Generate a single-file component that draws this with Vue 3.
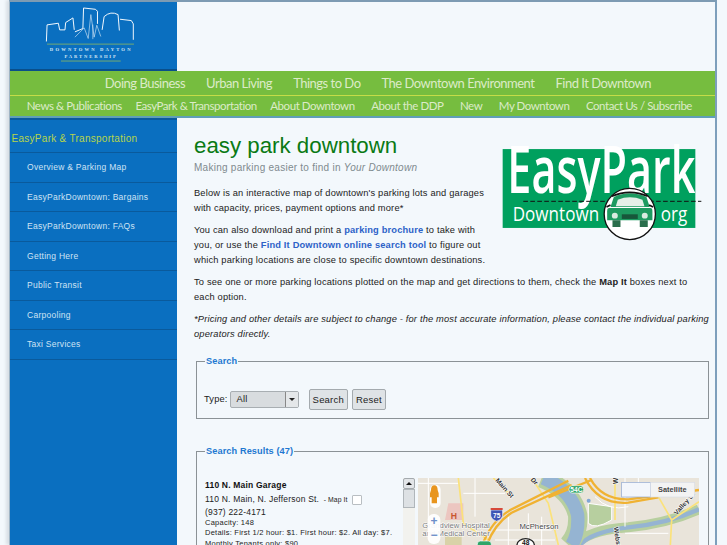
<template>
  <div class="page">
    <div class="wrap">
      <header class="top">
        <div class="brand">
          <svg class="skyline" viewBox="28 6 503 202" width="168" height="67">
            <path d="M136 125 L138 75 L172 70 L176 90 L192 90 L194 68 L216 54 L220 90 M222 96 L246 86 L248 24 L284 28 L290 34 L290 72 M304 90 L310 50 Q330 32 352 44 L356 92 M358 58 L392 62 L398 72 L398 120" fill="none" stroke="#f2f8fd" stroke-width="3"/>
            <path d="M222 112 L250 84 L262 116 L270 44 L280 112 L288 76 L300 110 M276 74 L276 118" fill="none" stroke="#cfe3f5" stroke-width="2"/>
            <path d="M138 133 H400 M180 184 H360" stroke="#a9c84a" stroke-width="2"/>
            <text class="brand-text" x="268" y="154" text-anchor="middle" textLength="243">DOWNTOWN DAYTON</text>
            <text class="brand-text" x="268" y="176" text-anchor="middle" textLength="155">PARTNERSHIP</text>
          </svg>
        </div>
        <div class="banner"></div>
      </header>

      <nav class="nav">
        <div class="nav-main">
          <a v-for="item in mainNav" :key="item">{{ item }}</a>
        </div>
        <div class="nav-sub">
          <a v-for="item in subNav" :key="item">{{ item }}</a>
        </div>
      </nav>

      <div class="body">
        <aside class="side">
          <div class="side-title">EasyPark &amp; Transportation</div>
          <a v-for="item in sideNav" :key="item" class="side-link">{{ item }}</a>
        </aside>

        <main class="content">
          <svg class="park-logo" viewBox="30 10 610 300" width="203" height="100">
            <rect x="38" y="28" width="579" height="237" fill="#00a05e"/>
            <text class="logo-big" x="52" y="160" textLength="565" lengthAdjust="spacingAndGlyphs">EasyPark</text>
            <path d="M100 185 H635" stroke="#111" stroke-width="3" stroke-dasharray="14 7"/>
            <text class="logo-small" x="68" y="245" textLength="260" lengthAdjust="spacingAndGlyphs">Downtown</text>
            <text class="logo-small" x="513" y="245" textLength="80" lengthAdjust="spacingAndGlyphs">org</text>
            <circle cx="420" cy="223" r="77" fill="#fff" stroke="#111" stroke-width="4"/>
            <path d="M372 172 Q420 150 470 172 L480 202 L362 202 Z" fill="#1d9a60"/>
            <path d="M384 180 Q420 166 458 180 L464 200 L378 200 Z" fill="#e6efe8"/>
            <path d="M358 205 H482 Q488 205 488 215 V242 H352 V215 Q352 205 358 205 Z" fill="#1d9a60"/>
            <path d="M368 242 H392 V262 H368 Z M450 242 H474 V262 H450 Z" fill="#2a6e4c"/>
            <circle cx="375" cy="228" r="9" fill="#d9ebe0"/>
            <circle cx="465" cy="228" r="9" fill="#d9ebe0"/>
            <path d="M396 224 H444 V238 H396 Z" fill="#17563a"/>
            <path d="M350 202 L362 196 M490 202 L478 196" stroke="#111" stroke-width="5"/>
            <path d="M366 170 Q420 146 474 170" fill="none" stroke="#111" stroke-width="5"/>
          </svg>

          <h1>easy park downtown</h1>
          <p class="tagline">Making parking easier to find in <em>Your Downtown</em></p>
          <p>Below is an interactive map of downtown's parking lots and garages with capacity, prices, payment options and more*</p>
          <p>You can also download and print a <a>parking brochure</a> to take with you, or use the <a>Find It Downtown online search tool</a> to figure out which parking locations are close to specific downtown destinations.</p>
          <p>To see one or more parking locations plotted on the map and get directions to them, check the <b>Map It</b> boxes next to each option.</p>
          <p><em>*Pricing and other details are subject to change - for the most accurate information, please contact the individual parking operators directly.</em></p>

          <fieldset class="box search">
            <legend>Search</legend>
            <div class="search-row">
              <label>Type:</label>
              <div class="select"><span>All</span><i class="select-btn"><i class="down"></i></i></div>
              <button>Search</button>
              <button>Reset</button>
            </div>
          </fieldset>

          <fieldset class="box results">
            <legend>Search Results (47)</legend>
            <div class="results-row">
              <div class="listing">
                <div class="garage">110 N. Main Garage</div>
                <div class="addr">110 N. Main, N. Jefferson St. <span class="mapit">- Map It</span><span class="check"></span></div>
                <div class="addr phone">(937) 222-4171</div>
                <div class="fine">Capacity: 148</div>
                <div class="fine">Details: First 1/2 hour: $1. First hour: $2. All day: $7.</div>
                <div class="fine">Monthly Tenants only: $90</div>
              </div>
              <div class="scroll">
                <span class="scroll-up"><i class="up"></i></span>
                <span class="scroll-thumb"></span>
              </div>
              <svg class="map" viewBox="69 114 843 201" width="281" height="67">
                <rect x="69" y="114" width="843" height="201" fill="#e9e4da"/>
                <path d="M540 315 Q580 270 700 262 Q820 250 912 208" fill="none" stroke="#b7cf9f" stroke-width="30"/>
                <path d="M555 315 Q590 275 700 262 Q820 250 912 208" fill="none" stroke="#95b4d2" stroke-width="13"/>
                <path d="M580 190 L650 200 L650 240 Q600 270 580 250 Z" fill="#b7cf9f" stroke="#fff" stroke-width="3"/>
                <path d="M440 114 Q530 150 548 225 Q552 280 520 315" fill="none" stroke="#b7cf9f" stroke-width="58"/>
                <path d="M445 114 Q530 150 548 225 Q552 280 530 315" fill="none" stroke="#95b4d2" stroke-width="40"/>
                <circle cx="581" cy="182" r="6" fill="#7fa6d6"/>
                <path d="M160 190 L205 190 L205 240 L150 240 Z" fill="#ecc6c0"/>
                <path d="M150 290 H200 V315 H150 Z" fill="#d9d2a8"/>
                <g fill="none" stroke="#fff" stroke-width="3">
                  <path d="M69 130 H190 M205 160 H330 M100 114 V240 M240 114 V230 M300 270 H470 M340 230 V315 M400 220 V315 M440 230 V315 M300 300 H480 M690 114 V260 M690 280 H820 M730 114 V170 M600 170 Q640 215 700 200"/>
                </g>
                <g fill="none" stroke="#fbe27a" stroke-width="5">
                  <path d="M190 114 L205 250 L280 300"/>
                  <path d="M410 114 L460 190 L490 315"/>
                  <path d="M660 114 V240"/>
                  <path d="M790 170 L830 240 L826 315 M830 240 L912 185"/>
                  <path d="M295 114 L350 170"/>
                </g>
                <g fill="none" stroke="#f0b232" stroke-width="7">
                  <path d="M262 315 Q290 240 350 208 L520 122"/>
                  <path d="M275 315 Q300 250 350 218 L530 135"/>
                  <path d="M460 172 L590 120"/>
                  <path d="M570 114 Q610 195 700 188 L790 172"/>
                  <path d="M585 114 Q620 180 700 178 L912 150"/>
                </g>
                <path d="M287 210 H323 V228 Q320 240 305 244 Q290 240 287 228 Z" fill="#3f55b5" stroke="#fff" stroke-width="2"/>
                <path d="M287 210 H323 V204 H287 Z" fill="#d6493a"/>
                <text class="m-shield" x="305" y="234" text-anchor="middle" fill="#fff">75</text>
                <rect x="522" y="137" width="44" height="22" rx="10" fill="#2fa568" stroke="#fff" stroke-width="2"/>
                <text class="m-shield" x="544" y="155" text-anchor="middle" fill="#fff">54C</text>
                <rect x="247" y="303" width="42" height="20" rx="9" fill="#2fa568" stroke="#fff" stroke-width="2"/>
                <ellipse cx="392" cy="314" rx="26" ry="18" fill="#fff" stroke="#222" stroke-width="4"/>
                <text class="m-shield" x="392" y="315" text-anchor="middle" fill="#111">48</text>
                <text class="m-h" x="177" y="238" text-anchor="middle">H</text>
                <text class="m-label" x="432" y="268" text-anchor="middle">McPherson</text>
                <text class="m-label gray" x="82" y="264">Grandview Hospital</text>
                <text class="m-label gray" x="82" y="288">and Medical Center</text>
                <text class="m-road" transform="translate(300 122) rotate(48)">Main St</text>
                <text class="m-road" transform="translate(406 120) rotate(48)">Dr</text>
                <text class="m-road" transform="translate(656 262) rotate(82)">Webster</text>
                <text class="m-road" transform="translate(845 226) rotate(-48)">Valley St</text>
                <text class="m-road" transform="translate(668 132) rotate(-90)">Web</text>
                <rect x="105" y="134" width="32" height="70" rx="15" fill="#fff" opacity=".9"/>
                <path d="M118 136 Q128 136 128 150 L131 160 V172 L126 172 V190 H110 V172 L105 172 V160 L108 150 Q108 136 118 136 Z" fill="#e8951e"/>
                <rect x="98" y="222" width="38" height="90" rx="17" fill="#fff" opacity=".92"/>
                <text class="m-zoom" x="117" y="254" text-anchor="middle">+</text>
                <text class="m-zoom" x="117" y="296" text-anchor="middle">−</text>
                <rect x="680" y="127" width="87" height="44" fill="#f3f6fb" stroke="#8ea6d0" stroke-width="2"/>
                <rect x="767" y="127" width="132" height="44" fill="#f3f3f3" stroke="#d8dde6" stroke-width="2"/>
                <text class="m-sat" x="832" y="156" text-anchor="middle">Satellite</text>
              </svg>
            </div>
          </fieldset>
        </main>
      </div>
    </div>
  </div>
</template>

<script setup>
const mainNav = ['Doing Business', 'Urban Living', 'Things to Do', 'The Downtown Environment', 'Find It Downtown']
const subNav = ['News & Publications', 'EasyPark & Transportation', 'About Downtown', 'About the DDP', 'New', 'My Downtown', 'Contact Us / Subscribe']
const sideNav = [
  'Overview & Parking Map',
  'EasyParkDowntown: Bargains',
  'EasyParkDowntown: FAQs',
  'Getting Here',
  'Public Transit',
  'Carpooling',
  'Taxi Services'
]
</script>

<style>
html, body {
  margin: 0;
  overflow: hidden;
  background: #f3f8fc;
}
</style>

<style scoped>
.page {
  height: 545px;
  width: 727px;
  overflow: hidden;
  padding-left: 9px;
  box-sizing: border-box;
  font-family: "Liberation Sans", Arial, sans-serif;
}

.wrap {
  width: 708px;
  height: 545px;
  box-sizing: border-box;
  border-top: 2px solid #7d9bb3;
  border-left: 1px solid #9fb4c4;
  border-right: 2px solid #7d9fbc;
  box-shadow: -3px 0 3px #d8dfe5;
  background: #f3f8fc;
  display: flex;
  flex-direction: column;
}

.top {
  display: flex;
  height: 67px;
  flex: none;
}

.brand {
  width: 167px;
  background: #0a6fc0;
  border-bottom: 2px solid #0a4f8a;
  margin-bottom: -2px;
}

.skyline {
  display: block;
}

.brand-text {
  font: bold 14px "Liberation Serif", serif;
  fill: #d6e8f6;
}

.banner {
  flex: 1;
}

.nav {
  flex: none;
  margin-top: 2px;
  background: #76bd3f;
  border-bottom: 2px solid #5f9fb8;
  color: #dcebc8;
  font-family: Lato, "Open Sans", sans-serif;
  white-space: nowrap;
}

.nav-main {
  display: flex;
  justify-content: flex-end;
  gap: 21px;
  height: 24px;
  line-height: 24px;
  padding-right: 64px;
  font-size: 13px;
  letter-spacing: -0.5px;
  border-bottom: 1px solid #c4dc48;
}

.nav-sub {
  display: flex;
  justify-content: flex-end;
  gap: 16.5px;
  height: 20px;
  line-height: 20px;
  padding-right: 23px;
  font-size: 11.5px;
  letter-spacing: -0.45px;
}

.nav-sub a:nth-child(2),
.nav-sub a:nth-child(3) {
  margin-left: -3px;
}

.body {
  flex: 1;
  display: flex;
  min-height: 0;
}

.side {
  width: 167px;
  flex: none;
  background: #0a6fc0;
  border-top: 2px solid #0a5a9c;
}

.side-title {
  height: 33px;
  line-height: 37px;
  padding-left: 1.5px;
  font-size: 10px;
  letter-spacing: 0.28px;
  color: #b7d54a;
  border-bottom: 1px solid #0a5a9c;
  box-sizing: border-box;
}

.side-link {
  display: block;
  height: 29.5px;
  line-height: 29px;
  padding-left: 17px;
  font-size: 8.5px;
  letter-spacing: 0.27px;
  color: #cfe3f4;
  border-bottom: 1px solid #0a5a9c;
  box-sizing: border-box;
}

.content {
  flex: 1;
  min-width: 0;
  padding: 13px 6px 0 17px;
  font-size: 9.3px;
  line-height: 14.8px;
  letter-spacing: 0.17px;
  color: #222;
}

.park-logo {
  float: right;
  margin: 12px 6px 0 10px;
}

.logo-big {
  font: 600 195px "Open Sans", sans-serif;
  fill: #fff;
}

.logo-small {
  font: 500 60px "Open Sans", sans-serif;
  fill: #fff;
}

h1 {
  margin: 0;
  font-size: 22.3px;
  line-height: 30px;
  font-weight: normal;
  letter-spacing: 0;
  color: #0a7a14;
}

p {
  margin: 0 0 7.7px;
}

.tagline {
  font-size: 10px;
  letter-spacing: 0.26px;
  color: #7f8a8f;
  margin: 0 0 10px;
}

.content p a {
  color: #2d62c8;
  font-weight: bold;
}

.box {
  margin: 13px 0 0 2px;
  padding: 0;
  border: 1.5px solid #8b9296;
  min-width: 0;
}

.box legend {
  margin-left: 8px;
  padding: 0 1px;
  font-size: 9.2px;
  line-height: 12px;
  letter-spacing: 0.1px;
  font-weight: bold;
  color: #1f78d1;
}

.search {
  height: 64px;
  box-sizing: border-box;
}

.search-row {
  display: flex;
  align-items: center;
  padding: 22px 0 0 7px;
}

.select {
  display: flex;
  justify-content: space-between;
  align-items: center;
  width: 69px;
  height: 17px;
  margin-left: 2px;
  padding-left: 6px;
  box-sizing: border-box;
  background: #d8dcdf;
  border: 1px solid #a8aeb2;
  border-radius: 2px;
}

.select-btn {
  display: flex;
  align-items: center;
  justify-content: center;
  width: 12px;
  height: 15px;
  border-left: 1px solid #888;
  background: #e4e7e9;
}

.down {
  border: 3px solid transparent;
  border-top: 3.5px solid #222;
  border-bottom: 0;
}

button {
  margin-left: 4px;
  height: 21px;
  padding: 0 3px;
  font: 9.5px "Liberation Sans", Arial, sans-serif;
  letter-spacing: 0.2px;
  color: #222;
  background: #dfe3e6;
  border: 1px solid #a4aaae;
  border-radius: 2px;
}

.select + button {
  margin-left: 10px;
}

.results {
  margin-top: 26px;
  height: 200px;
  box-sizing: border-box;
}

.results-row {
  display: flex;
  align-items: flex-start;
  padding: 21px 0 0 8px;
}

.listing {
  width: 198px;
  flex: none;
}

.garage {
  font-size: 8.5px;
  line-height: 15px;
  letter-spacing: 0.2px;
  font-weight: bold;
  color: #111;
}

.addr {
  font-size: 8.5px;
  line-height: 13px;
  letter-spacing: 0.2px;
  display: flex;
  align-items: center;
  white-space: pre;
}

.phone {
  line-height: 12px;
}

.mapit {
  font-size: 6.8px;
  letter-spacing: 0.1px;
  margin-left: 2px;
}

.check {
  width: 8px;
  height: 8px;
  margin-left: 4px;
  background: #fff;
  border: 1px solid #b8bec2;
  border-radius: 1px;
}

.fine {
  font-size: 7.5px;
  line-height: 10.3px;
  letter-spacing: 0.25px;
  white-space: nowrap;
}

.scroll {
  width: 12px;
  height: 67px;
  flex: none;
  background: #f2f2ee;
}

.scroll-up {
  display: flex;
  align-items: center;
  justify-content: center;
  height: 11px;
  background: #e2e5e8;
  border: 1px solid #a4aaae;
  border-radius: 2px;
  box-sizing: border-box;
}

.up {
  border: 3px solid transparent;
  border-bottom: 3.5px solid #111;
  border-top: 0;
}

.scroll-thumb {
  display: block;
  height: 19px;
  background: #dde1e4;
  border: 1px solid #b0b6ba;
  box-sizing: border-box;
}

.map {
  margin-left: 3px;
  flex: none;
}

.m-label {
  font: 23px "Liberation Sans", Arial, sans-serif;
  fill: #444;
  stroke: #fff;
  stroke-width: 3px;
  paint-order: stroke;
}

.gray {
  fill: #777;
}

.m-road {
  font: bold 20px "Liberation Sans", Arial, sans-serif;
  fill: #333;
  stroke: #fff;
  stroke-width: 3px;
  paint-order: stroke;
}

.m-shield {
  font: bold 20px "Liberation Sans", Arial, sans-serif;
}

.m-h {
  font: bold 26px "Liberation Sans", Arial, sans-serif;
  fill: #c8552f;
}

.m-zoom {
  font: bold 36px "Liberation Sans", Arial, sans-serif;
  fill: #6d8fc9;
}

.m-sat {
  font: bold 22px "Liberation Sans", Arial, sans-serif;
  fill: #444;
}
</style>
